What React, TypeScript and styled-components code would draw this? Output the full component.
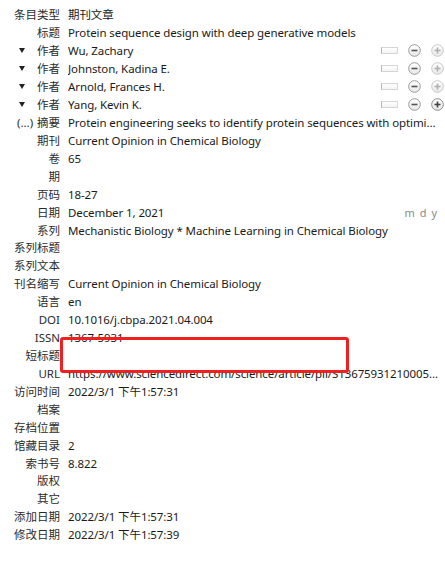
import React from 'react';
import styled, { createGlobalStyle } from 'styled-components';

const GlobalStyle = createGlobalStyle`
  html, body {
    margin: 0;
    padding: 0;
    background: #ffffff;
  }
  body {
    font-family: "Noto Sans", "Noto Sans CJK SC", sans-serif;
    font-size: 11.5px;
    color: #1a1a1a;
  }
`;

const Pane = styled.div`
  position: relative;
  width: 445px;
  height: 563px;
  padding: 6px 1px 0 0;
  box-sizing: border-box;
  overflow: hidden;
`;

const Row = styled.div`
  display: flex;
  align-items: center;
  gap: 8px;
  height: 17.93px;
  line-height: 17px;
  white-space: nowrap;
`;

const Label = styled.div`
  flex: 0 0 60px;
  display: flex;
  justify-content: flex-end;
  align-items: center;
  color: #2b2b2b;
`;

const LabelPrefix = styled.span`
  flex: 1;
  display: flex;
  align-items: center;
  padding-left: 17px;
  color: #2b2b2b;
`;

const Triangle = styled.span`
  width: 0;
  height: 0;
  margin-left: 2px;
  border-left: 3.5px solid transparent;
  border-right: 3.5px solid transparent;
  border-top: 5px solid #222;
`;

const Value = styled.div`
  flex: 1;
  min-width: 0;
  padding-right: 5px;
  letter-spacing: -0.1px;
  overflow: hidden;
  text-overflow: ellipsis;
`;

const Extras = styled.div`
  display: flex;
  align-items: center;
  gap: 10px;
`;

const NameToggle = styled.span`
  width: 15px;
  height: 5px;
  border: 1px solid #d6d6d6;
  border-left-color: #b5b5b5;
  background: linear-gradient(#ffffff, #f3f3f3);
`;

const DateOrder = styled.span`
  color: #8a8a8a;
  letter-spacing: 1px;
  font-size: 11px;
  padding-right: 6px;
`;

const Highlight = styled.div`
  position: absolute;
  left: 60px;
  top: 337px;
  width: 283px;
  height: 30px;
  border: 3px solid #ef2020;
  border-radius: 3px;
`;

const CircleIcon: React.FC<{ kind: 'minus' | 'plus'; strong?: boolean }> = ({ kind, strong }) => {
  const ring = kind === 'minus' ? '#9a9a9a' : strong ? '#8a8a8a' : '#c8c8c8';
  const mark = kind === 'minus' ? '#555' : strong ? '#444' : '#b0b0b0';
  return (
    <svg width="13" height="13" viewBox="0 0 13 13">
      <defs>
        <linearGradient id={`g-${kind}`} x1="0" y1="0" x2="0" y2="1">
          <stop offset="0" stopColor="#ffffff" />
          <stop offset="1" stopColor="#e8e8e8" />
        </linearGradient>
      </defs>
      <circle cx="6.5" cy="6.5" r="5.8" fill={`url(#g-${kind})`} stroke={ring} strokeWidth="1" />
      <rect x="3.5" y="5.7" width="6" height="1.6" fill={mark} />
      {kind === 'plus' && <rect x="5.7" y="3.5" width="1.6" height="6" fill={mark} />}
    </svg>
  );
};

type Field = { label: string; value?: string; author?: boolean; last?: boolean; prefix?: string; date?: boolean };

const fields: Field[] = [
  { label: '条目类型', value: '期刊文章' },
  { label: '标题', value: 'Protein sequence design with deep generative models' },
  { label: '作者', value: 'Wu, Zachary', author: true },
  { label: '作者', value: 'Johnston, Kadina E.', author: true },
  { label: '作者', value: 'Arnold, Frances H.', author: true },
  { label: '作者', value: 'Yang, Kevin K.', author: true, last: true },
  { label: '摘要', prefix: '(...)', value: 'Protein engineering seeks to identify protein sequences with optimized properties. When guided by machine intelligence' },
  { label: '期刊', value: 'Current Opinion in Chemical Biology' },
  { label: '卷', value: '65' },
  { label: '期' },
  { label: '页码', value: '18-27' },
  { label: '日期', value: 'December 1, 2021', date: true },
  { label: '系列', value: 'Mechanistic Biology * Machine Learning in Chemical Biology' },
  { label: '系列标题' },
  { label: '系列文本' },
  { label: '刊名缩写', value: 'Current Opinion in Chemical Biology' },
  { label: '语言', value: 'en' },
  { label: 'DOI', value: '10.1016/j.cbpa.2021.04.004' },
  { label: 'ISSN', value: '1367-5931' },
  { label: '短标题' },
  { label: 'URL', value: 'https://www.sciencedirect.com/science/article/pii/S1367593121000533' },
  { label: '访问时间', value: '2022/3/1 下午1:57:31' },
  { label: '档案' },
  { label: '存档位置' },
  { label: '馆藏目录', value: '2' },
  { label: '索书号', value: '8.822' },
  { label: '版权' },
  { label: '其它' },
  { label: '添加日期', value: '2022/3/1 下午1:57:31' },
  { label: '修改日期', value: '2022/3/1 下午1:57:39' },
];

const App: React.FC = () => (
  <>
    <GlobalStyle />
    <Pane>
      {fields.map((f, i) => (
        <Row key={i}>
          <Label>
            {f.author && (
              <LabelPrefix>
                <Triangle />
              </LabelPrefix>
            )}
            {f.prefix && <LabelPrefix>{f.prefix}</LabelPrefix>}
            {f.label}
          </Label>
          <Value>{f.value}</Value>
          {f.author && (
            <Extras>
              <NameToggle />
              <CircleIcon kind="minus" />
              <CircleIcon kind="plus" strong={f.last} />
            </Extras>
          )}
          {f.date && <DateOrder>m d y</DateOrder>}
        </Row>
      ))}
      <Highlight />
    </Pane>
  </>
);

export default App;
